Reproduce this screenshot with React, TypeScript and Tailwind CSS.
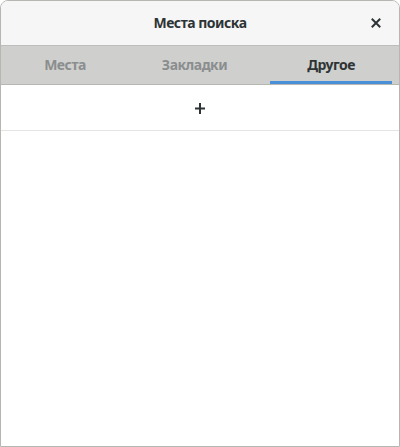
import React from 'react';

const tabs = [
  { label: 'Места', cls: 'ml-[8px] w-[112px]', active: false },
  { label: 'Закладки', cls: 'ml-[15px] w-[117px]', active: false },
  { label: 'Другое', cls: 'ml-[17px] w-[122px]', active: true },
];

const App: React.FC = () => {
  return (
    <div className="w-[400px] h-[447px] bg-white" style={{ fontFamily: '"Noto Sans", "DejaVu Sans", sans-serif' }}>
      <div className="h-full flex flex-col rounded-t-[8px] border border-[#b6b6b3] overflow-hidden bg-white">
        {/* header */}
        <div className="h-[45px] shrink-0 relative flex items-center justify-center bg-[#f6f6f6] border-b border-[#bdbdbb]">
          <span className="text-[14px] font-bold tracking-[-0.5px] text-[#2e3436] -mt-[2px]">Места поиска</span>
          <button className="absolute right-[14px] top-[13px] w-[18px] h-[18px] flex items-center justify-center">
            <svg width="10" height="10" viewBox="0 0 10 10">
              <path d="M1.5 1.5 L8.5 8.5 M8.5 1.5 L1.5 8.5" stroke="#2e3436" strokeWidth="2" strokeLinecap="square" />
            </svg>
          </button>
        </div>

        {/* tabs */}
        <div className="h-[39px] shrink-0 flex bg-[#cfcfcd] border-b border-[#b6b6b3]">
          {tabs.map((t) => (
            <div
              key={t.label}
              className={`${t.cls} h-full flex items-center justify-center text-[14px] font-bold tracking-[-0.5px] border-b-[3px] ${
                t.active ? 'text-[#2e3436] border-[#4a90d9]' : 'text-[#8b8e8f] border-transparent'
              }`}
            >
              <span className="mt-[1px]">{t.label}</span>
            </div>
          ))}
        </div>

        {/* content */}
        <div className="flex-1 flex flex-col">
          <div className="h-[46px] flex items-center justify-center border-b border-[#e4e4e2]">
            <svg width="10" height="11" viewBox="0 0 10 11" className="mt-[1px]">
              <path d="M5 0 V11 M0 5.5 H10" stroke="#2e3436" strokeWidth="2" />
            </svg>
          </div>
        </div>
      </div>
    </div>
  );
};

export default App;
